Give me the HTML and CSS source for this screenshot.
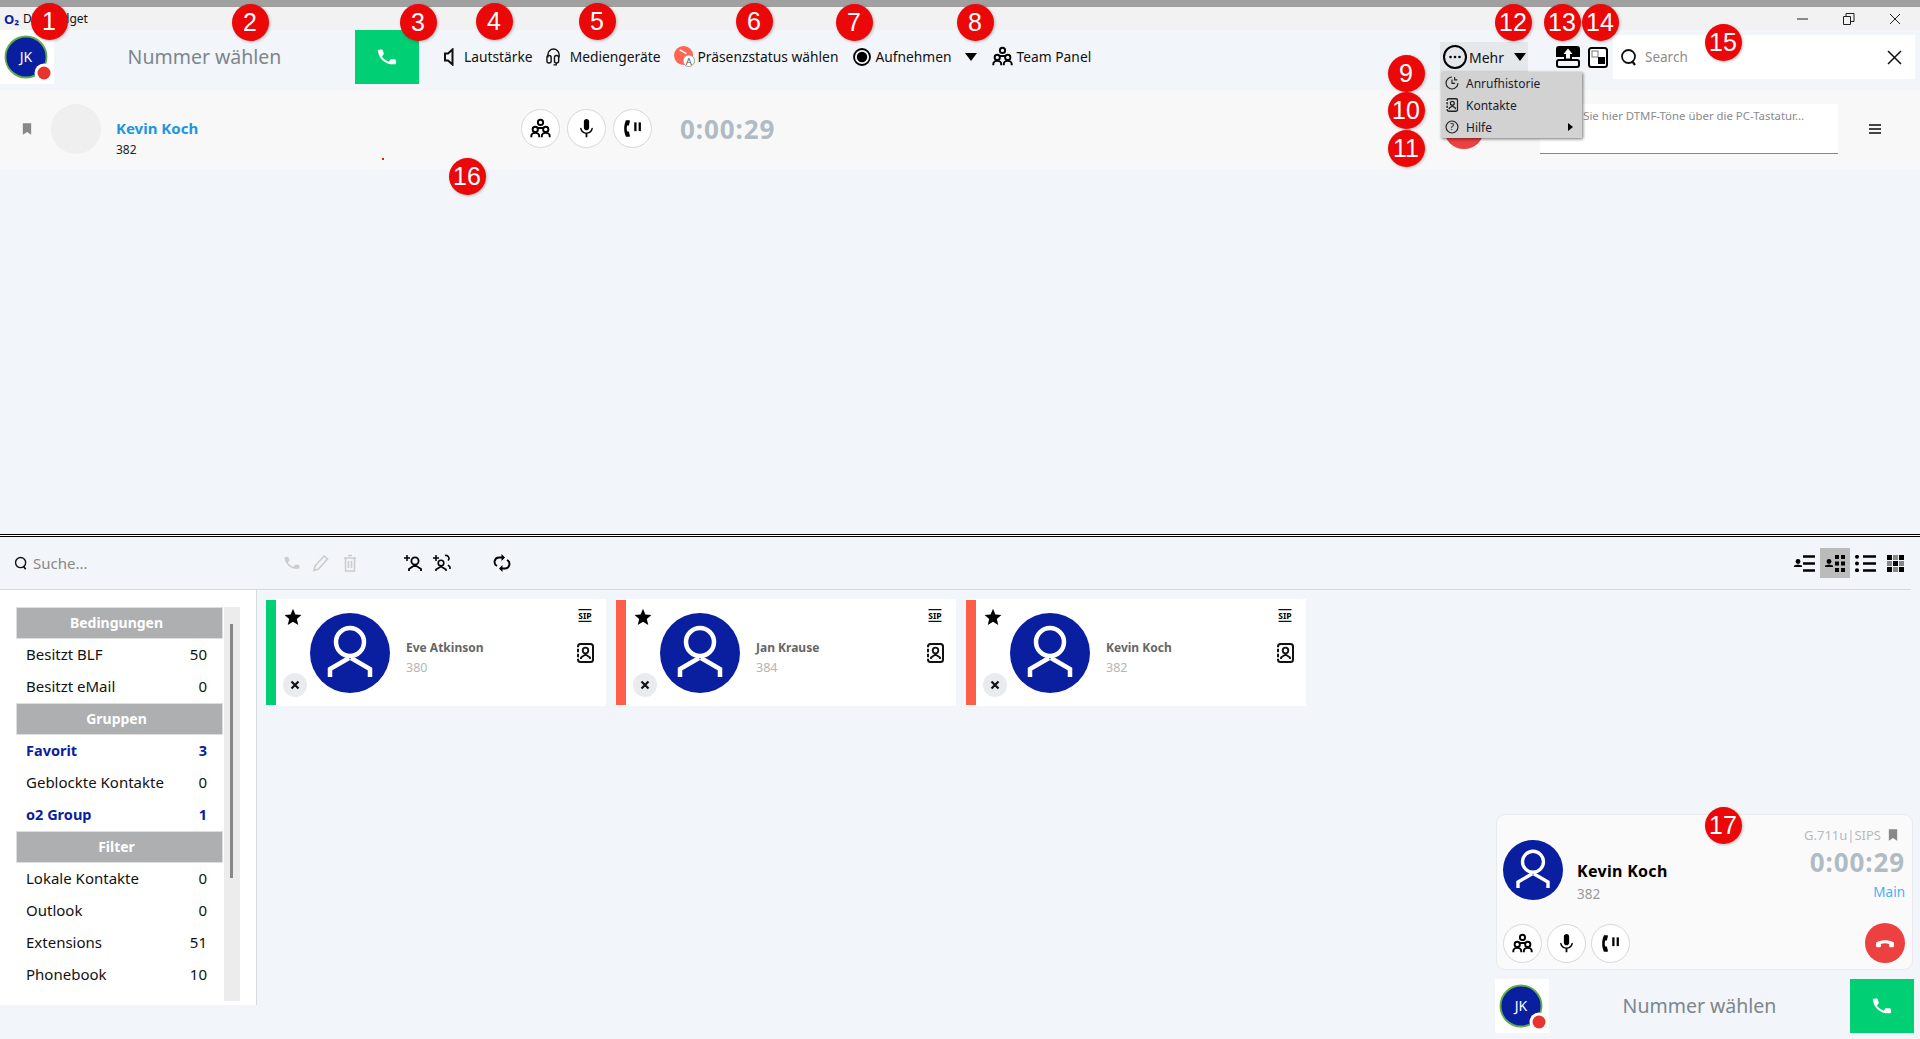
FILE: index.html
```html
<!DOCTYPE html>
<html lang="de">
<head>
<meta charset="utf-8">
<title>Dial Widget</title>
<link rel="stylesheet" href="styles.css">
</head>
<body>
<svg class="defs" aria-hidden="true">
  <symbol id="phone" viewBox="0 0 24 24"><path d="M6.600 10.800c1.400 2.800 3.800 5.100 6.600 6.600l2.200-2.200c.3-.3.700-.4 1-.2 1.100.4 2.300.6 3.600.6.500 0 1 .4 1 1V20c0 .5-.5 1-1 1C10.600 21 3 13.400 3 4c0-.5.500-1 1-1h3.500c.5 0 1 .5 1 1 0 1.200.2 2.400.6 3.600.1.300 0 .7-.3 1l-2.200 2.200z" transform="rotate(-8 12 12)"/></symbol>
  <symbol id="person" viewBox="-40 -40 80 80"><g fill="none" stroke="#fff" stroke-width="4.500"><circle cx="0" cy="-11" r="14"/><path d="M-20 24v-8L-1 5M20 24v-8L1 5"/></g></symbol>
  <symbol id="team" viewBox="0 0 24 24"><g fill="none" stroke="currentColor" stroke-width="2.200"><circle cx="12" cy="5" r="3"/><circle cx="6" cy="13" r="3"/><circle cx="18" cy="13" r="3"/><path d="M1.500 22v-1.500c0-2 2-3.500 4.500-3.500s4.500 1.500 4.500 3.500V22M13.500 22v-1.500c0-2 2-3.500 4.500-3.500s4.500 1.500 4.500 3.500V22M9 11.500h6"/></g></symbol>
  <symbol id="mic" viewBox="0 0 24 24"><path d="M12 14c1.700 0 3-1.300 3-3V4c0-1.700-1.300-3-3-3S9 2.300 9 4v7c0 1.700 1.300 3 3 3z"/><path d="M18.500 11c-.4 0-.7.300-.8.700-.4 2.800-2.800 4.800-5.700 4.800s-5.300-2-5.700-4.800c-.1-.4-.4-.7-.8-.7-.5 0-.9.400-.8.900.4 3.300 3.100 5.700 6.300 6.200V22h2v-3.900c3.200-.5 5.900-2.900 6.300-6.200.1-.5-.3-.9-.8-.9z"/></symbol>
  <symbol id="hold" viewBox="0 0 24 24"><path d="M8 2.500H4.500C3 6 2.500 9 2.500 12s.5 6 2 9.500H8c.8 0 1.200-.6 1-1.300L8 16c-.2-.6-.8-.9-1.300-.7l-.7.200c-.4-1.200-.6-2.300-.6-3.500s.2-2.300.6-3.500l.7.200c.5.200 1.100-.1 1.300-.7l1-4.200c.2-.7-.2-1.300-1-1.300z"/><rect x="14" y="5" width="2.600" height="10"/><rect x="19" y="5" width="2.600" height="10"/></symbol>
  <symbol id="bookmark" viewBox="0 0 12 14"><path d="M1 0h10v14L6 10.500 1 14z"/></symbol>
  <symbol id="search" viewBox="0 0 18 18"><circle cx="8.500" cy="8.500" r="6.500" fill="none" stroke="currentColor" stroke-width="1.800"/><path d="M12 13l3 4" stroke="currentColor" stroke-width="2.200" fill="none"/></symbol>
  <symbol id="star" viewBox="0 0 24 24"><path d="M12 1l3.200 7.500 8 .7-6.100 5.300 1.900 8-7-4.300-7 4.300 1.900-8L.8 9.200l8-.7z"/></symbol>
  <symbol id="cross" viewBox="0 0 10 10"><path d="M1.500 1.500l7 7M8.500 1.500l-7 7" stroke="#111" stroke-width="2.200" fill="none"/></symbol>
  <symbol id="sip" viewBox="0 0 18 16"><path d="M1 .8h16M1 15.200h16" stroke="currentColor" stroke-width="1.400"/><text x="9" y="12.500" text-anchor="middle" font-family="Noto Sans" font-weight="700" font-size="10.500">SIP</text></symbol>
  <symbol id="contact" viewBox="0 0 18 20"><rect x="2" y="1" width="15" height="18" rx="2.500" fill="none" stroke="currentColor" stroke-width="2"/><circle cx="9.500" cy="7.500" r="2.800" fill="none" stroke="currentColor" stroke-width="1.800"/><path d="M5 16v-1.500l4.500-3 4.500 3V16" fill="none" stroke="currentColor" stroke-width="1.800"/><path d="M0 5h3M0 10h3M0 15h3" stroke="#fff" stroke-width="1.500"/></symbol>
  <symbol id="avatar-mini" viewBox="0 0 54 54"><rect width="54" height="54" fill="#fff"/><circle cx="26" cy="27" r="20.500" fill="#0a1ea0" stroke="#5fae46" stroke-width="1.800"/><circle cx="44" cy="43" r="9.500" fill="#fff"/><circle cx="44" cy="43" r="6.500" fill="#e8332e"/><text x="26" y="32" text-anchor="middle" fill="#fff" font-family="Noto Sans" font-size="14">JK</text></symbol>
</svg>

<div class="app">
  <div class="top-strip"></div>
  <div class="titlebar">
    <span class="o2-logo">O₂</span>
    <span class="title-text">Dial Widget</span>
    <div class="win-controls">
      <svg class="win-ic" viewBox="0 0 12 12"><path d="M0 6h11" stroke="#222" stroke-width="1"/></svg>
      <svg class="win-ic" viewBox="0 0 12 12"><path d="M.5 3.500h7v8h-7zM3 3V.5h8v8H8" fill="none" stroke="#222" stroke-width="1"/></svg>
      <svg class="win-ic" viewBox="0 0 12 12"><path d="M1 1l10 10M11 1L1 11" stroke="#222" stroke-width="1"/></svg>
    </div>
  </div>

  <div class="toolbar">
    <svg class="avatar-tile"><use href="#avatar-mini"/></svg>
    <div class="dial-label dial-top">Nummer wählen</div>
    <button class="call-btn"><svg class="call-ic"><use href="#phone"/></svg></button>
    <div class="tools">
      <span class="tool gap10"><svg class="ic-vol" viewBox="0 0 10 18"><path d="M8.500 1.500L4 5.500H1v7h3l4.500 4z" fill="none" stroke="#111" stroke-width="2"/></svg>Lautstärke</span>
      <span class="tool gap9"><svg class="ic-head" viewBox="0 0 16 20"><path d="M2 11V8a6 6 0 0 1 12 0v3" fill="none" stroke="#111" stroke-width="1.500"/><rect x="1" y="9" width="4.500" height="8" rx="2.200" fill="none" stroke="#111" stroke-width="1.500"/><rect x="9" y="9" width="4.500" height="8" rx="2.200" fill="none" stroke="#111" stroke-width="1.500"/><path d="M11 17v2H8" fill="none" stroke="#111" stroke-width="1.300"/></svg>Mediengeräte</span>
      <span class="tool gap3"><svg class="ic-pres" viewBox="0 0 22 22"><circle cx="10" cy="10" r="10" fill="#ff6553"/><path d="M6 4l7 4" stroke="#fff" stroke-width="1.600"/><circle cx="15.500" cy="15.500" r="6" fill="#fff" stroke="#999"/><text x="15.500" y="19.500" text-anchor="middle" font-family="Noto Sans" font-size="10" fill="#555">A</text></svg>Präsenzstatus wählen</span>
      <span class="tool gap4 rec-tool"><svg class="ic-rec" viewBox="0 0 18 18"><circle cx="9" cy="9" r="8" fill="none" stroke="#000" stroke-width="1.800"/><circle cx="9" cy="9" r="5.200"/></svg>Aufnehmen</span>
      <svg class="caret" viewBox="0 0 12 8"><path d="M0 0h12L6 8z"/></svg>
      <span class="tool gap4 team-tool"><svg class="ic-team"><use href="#team"/></svg>Team Panel</span>
    </div>
    <div class="right-tools">
      <span class="more"><svg class="ic-more" viewBox="0 0 24 24"><circle cx="12" cy="12" r="11" fill="none" stroke="#000" stroke-width="2"/><circle cx="7.500" cy="12" r="1.300"/><circle cx="12" cy="12" r="1.300"/><circle cx="16.500" cy="12" r="1.300"/></svg><span>Mehr</span><svg class="caret more-caret" viewBox="0 0 12 8"><path d="M0 0h12L6 8z"/></svg></span>
      <svg class="ic-upload" viewBox="0 0 24 22"><path d="M3 0h18a3 3 0 0 1 3 3v8h-8V13H8v-2H0V3a3 3 0 0 1 3-3z"/><path d="M12 2.500L16.500 8H14v4.500h-4V8H7.500z" fill="#fff"/><rect x="1" y="14" width="22" height="7" rx="2" fill="none" stroke="#000" stroke-width="2"/></svg>
      <svg class="ic-window" viewBox="0 0 20 21"><rect x="1" y="1" width="18" height="19" rx="2.500" fill="#fff" stroke="#000" stroke-width="2"/><rect x="4" y="4" width="6" height="6" fill="#fff" stroke="#777"/><rect x="10" y="10" width="7" height="7"/></svg>
      <div class="search-box">
        <svg class="ic-search"><use href="#search"/></svg>
        <span class="search-ph">Search</span>
        <svg class="ic-close" viewBox="0 0 15 15"><path d="M1 1l13 13M14 1L1 14" stroke="#111" stroke-width="1.500"/></svg>
      </div>
    </div>
  </div>

  <div class="call-row">
    <svg class="ic-bookmark"><use href="#bookmark"/></svg>
    <div class="call-avatar"></div>
    <div class="call-info">
      <div class="call-name">Kevin Koch</div>
      <div class="call-num">382</div>
    </div>
    <div class="round-group">
      <button class="round"><svg class="rg-ic"><use href="#team"/></svg></button>
      <button class="round"><svg class="rg-ic"><use href="#mic"/></svg></button>
      <button class="round"><svg class="rg-ic"><use href="#hold"/></svg></button>
    </div>
    <div class="timer timer-top">0:00:29</div>
    <button class="hangup hangup-top"></button>
    <div class="dtmf">Senden Sie hier DTMF-Töne über die PC-Tastatur...</div>
    <div class="burger"><i></i><i></i><i></i></div>
  </div>

  <div class="spacer"><span class="red-dot"></span></div>
  <div class="divider"></div>

  <div class="contact-toolbar">
    <svg class="ic-search-sm"><use href="#search"/></svg>
    <span class="suche">Suche...</span>
    <svg class="ct-ic off first"><use href="#phone"/></svg>
    <svg class="ct-ic off" viewBox="0 0 18 18"><path d="M3 12L12 2l3.500 3-9 10L2 16.500z" fill="none" stroke="currentColor" stroke-width="1.600"/></svg>
    <svg class="ct-ic off" viewBox="0 0 18 18"><path d="M3 4h12M7 1.500h4M4.500 4v13h9V4M7.500 7v7M10.500 7v7" fill="none" stroke="currentColor" stroke-width="1.600"/></svg>
    <svg class="ct-ic second" viewBox="0 0 18 18"><path d="M0 4h6M3 1v6" stroke="#000" stroke-width="1.500"/><circle cx="11" cy="7" r="3.600" fill="none" stroke="#000" stroke-width="1.800"/><path d="M5 17v-2l6-4 6 4v2" fill="none" stroke="#000" stroke-width="1.800"/></svg>
    <svg class="ct-ic" viewBox="0 0 18 18"><path d="M0 4h6M3 1v6" stroke="#000" stroke-width="1.500"/><circle cx="8" cy="9" r="2.800" fill="none" stroke="#000" stroke-width="1.600"/><path d="M3 17v-1.500l5-3 5 3V17" fill="none" stroke="#000" stroke-width="1.600"/><path d="M12 1.500a3 3 0 0 1 3 5M15 11l2 2v2" fill="none" stroke="#000" stroke-width="1.600"/></svg>
    <svg class="ct-ic third" viewBox="0 0 18 18"><path d="M9 3.500H6a4.500 4.500 0 0 0-2 8.500M9 14.500h3a4.500 4.500 0 0 0 2-8.500" fill="none" stroke="#000" stroke-width="1.900"/><path d="M8.500 0L12 3.500 8.500 7zM9.500 11L6 14.500 9.500 18z"/></svg>
    <div class="views">
      <svg class="view-ic" viewBox="0 0 21 17"><path d="M9 1.500h12M9 8.500h12M9 15.500h12" stroke="#000" stroke-width="2.400"/><circle cx="4" cy="6.500" r="2.400"/><path d="M0 12h8v-1.500L4 9.500l-4 1z"/></svg>
      <span class="view-active"><svg class="view-ic" viewBox="0 0 21 17"><circle cx="4" cy="6.500" r="2.400"/><path d="M0 12h8v-1.500L4 9.500l-4 1z"/><path d="M10 0h4v4h-4zM16 0h4v4h-4zM10 6.500h4v4h-4zM16 6.500h4v4h-4zM10 13h4v4h-4zM16 13h4v4h-4z"/></svg></span>
      <svg class="view-ic" viewBox="0 0 21 17"><path d="M8 1.500h13M8 8.500h13M8 15.500h13" stroke="#000" stroke-width="2.400"/><circle cx="2" cy="1.800" r="2"/><circle cx="2" cy="8.500" r="2"/><circle cx="2" cy="15.200" r="2"/></svg>
      <svg class="view-ic grid-ic" viewBox="0 0 17 17"><path d="M0 0h5v5H0zM12 0h5v5h-5zM6 6h5v5H6zM0 12h5v5H0zM12 12h5v5h-5z"/><path d="M6 0h5v5H6zM0 6h5v5H0zM12 6h5v5h-5zM6 12h5v5H6z" fill="#888"/></svg>
    </div>
  </div>

  <div class="content">
    <aside class="sidebar">
      <div class="filter-list">
        <div class="sec-head">Bedingungen</div>
        <div class="f-row"><span>Besitzt BLF</span><span>50</span></div>
        <div class="f-row"><span>Besitzt eMail</span><span>0</span></div>
        <div class="sec-head">Gruppen</div>
        <div class="f-row active"><span>Favorit</span><span>3</span></div>
        <div class="f-row"><span>Geblockte Kontakte</span><span>0</span></div>
        <div class="f-row active"><span>o2 Group</span><span>1</span></div>
        <div class="sec-head">Filter</div>
        <div class="f-row"><span>Lokale Kontakte</span><span>0</span></div>
        <div class="f-row"><span>Outlook</span><span>0</span></div>
        <div class="f-row"><span>Extensions</span><span>51</span></div>
        <div class="f-row"><span>Phonebook</span><span>10</span></div>
      </div>
      <div class="scroll-track"><div class="scroll-thumb"></div></div>
    </aside>
    <main class="cards">
      <article class="card">
        <div class="bar green"></div>
        <div class="card-left"><svg class="star"><use href="#star"/></svg><span class="x-btn"><svg class="x-ic"><use href="#cross"/></svg></span></div>
        <div class="card-av"><svg class="card-person"><use href="#person"/></svg></div>
        <div class="card-info"><div class="card-name">Eve Atkinson</div><div class="card-num">380</div></div>
        <div class="card-right"><svg class="sip"><use href="#sip"/></svg><svg class="contact"><use href="#contact"/></svg></div>
      </article>
      <article class="card">
        <div class="bar red"></div>
        <div class="card-left"><svg class="star"><use href="#star"/></svg><span class="x-btn"><svg class="x-ic"><use href="#cross"/></svg></span></div>
        <div class="card-av"><svg class="card-person"><use href="#person"/></svg></div>
        <div class="card-info"><div class="card-name">Jan Krause</div><div class="card-num">384</div></div>
        <div class="card-right"><svg class="sip"><use href="#sip"/></svg><svg class="contact"><use href="#contact"/></svg></div>
      </article>
      <article class="card">
        <div class="bar red"></div>
        <div class="card-left"><svg class="star"><use href="#star"/></svg><span class="x-btn"><svg class="x-ic"><use href="#cross"/></svg></span></div>
        <div class="card-av"><svg class="card-person"><use href="#person"/></svg></div>
        <div class="card-info"><div class="card-name">Kevin Koch</div><div class="card-num">382</div></div>
        <div class="card-right"><svg class="sip"><use href="#sip"/></svg><svg class="contact"><use href="#contact"/></svg></div>
      </article>
    </main>
  </div>
  <div class="foot"></div>
</div>

<div class="menu">
  <div class="m-row"><svg class="m-ic" viewBox="0 0 16 16"><path d="M8 1.200A6.800 6.800 0 1 0 14.800 8" fill="none" stroke="#222" stroke-width="1.300"/><path d="M8 4v4.500h3.500M11 1v3.500h3" fill="none" stroke="#222" stroke-width="1.300"/></svg><span>Anrufhistorie</span></div>
  <div class="m-row"><svg class="m-ic" viewBox="0 0 18 20"><use href="#contact"/></svg><span>Kontakte</span></div>
  <div class="m-row"><svg class="m-ic" viewBox="0 0 16 16"><circle cx="8" cy="8" r="6.800" fill="none" stroke="#222" stroke-width="1.300"/><text x="8" y="11.800" text-anchor="middle" font-family="Noto Sans" font-size="10.500">?</text></svg><span>Hilfe</span><svg class="m-arrow" viewBox="0 0 5 8"><path d="M0 0l5 4-5 4z"/></svg></div>
</div>

<section class="dock">
  <div class="dock-card">
    <div class="dock-top">
      <div class="dock-av"><svg class="dock-person"><use href="#person"/></svg></div>
      <div class="dock-info"><div class="dock-name">Kevin Koch</div><div class="dock-num">382</div></div>
      <div class="dock-meta">
        <div class="codec"><span>G.711u|SIPS</span><svg class="ic-bookmark"><use href="#bookmark"/></svg></div>
        <div class="timer dock-timer">0:00:29</div>
        <div class="main-lbl">Main</div>
      </div>
    </div>
    <div class="dock-actions">
      <div class="round-group dock-group">
        <button class="round"><svg class="rg-ic"><use href="#team"/></svg></button>
        <button class="round"><svg class="rg-ic"><use href="#mic"/></svg></button>
        <button class="round"><svg class="rg-ic"><use href="#hold"/></svg></button>
      </div>
      <button class="hangup"><svg class="hang-ic" viewBox="0 0 24 24"><path d="M12 9c-3 0-6 .6-8.800 2-.6.3-1 .9-1 1.500v3c0 .5.500 1 1 1h3.300c.5 0 1-.5 1-1v-2.500c1.600-.5 3-.7 4.500-.7s2.900.2 4.500.7V15.500c0 .5.500 1 1 1h3.300c.5 0 1-.5 1-1v-3c0-.6-.4-1.200-1-1.500C18 9.600 15 9 12 9z"/></svg></button>
    </div>
  </div>
  <div class="dock-dial">
    <svg class="avatar-tile"><use href="#avatar-mini"/></svg>
    <div class="dial-label dial-bottom">Nummer wählen</div>
    <button class="call-btn"><svg class="call-ic"><use href="#phone"/></svg></button>
  </div>
</section>

<span class="badge b1">1</span><span class="badge b2">2</span><span class="badge b3">3</span><span class="badge b4">4</span><span class="badge b5">5</span><span class="badge b6">6</span><span class="badge b7">7</span><span class="badge b8">8</span><span class="badge b9">9</span><span class="badge b10">10</span><span class="badge b11">11</span><span class="badge b12">12</span><span class="badge b13">13</span><span class="badge b14">14</span><span class="badge b15">15</span><span class="badge b16">16</span><span class="badge b17">17</span>
</body>
</html>
```
FILE: styles.css
```css
* { box-sizing: border-box; }
html, body { margin: 0; height: 100%; overflow: hidden; }
body { font-family: "Noto Sans", "Liberation Sans", sans-serif; font-size: 14px; color: #111; background: #f2f5f9; position: relative; }
button { border: 0; padding: 0; font: inherit; cursor: pointer; }
svg { display: block; flex: none; }
.defs { position: absolute; width: 0; height: 0; }

.app { height: 1039px; display: flex; flex-direction: column; }
.top-strip { height: 7px; background: #a0a0a0; }

.titlebar { height: 23px; background: #f2f2f2; display: flex; align-items: center; padding-left: 4px; }
.o2-logo { width: 19px; font-weight: 700; font-size: 13px; color: #0a1ea0; }
.title-text { font-size: 12px; }
.win-controls { margin-left: auto; padding-right: 19px; display: flex; gap: 34px; }
.win-ic { width: 12px; height: 12px; }

.toolbar { height: 60px; display: flex; align-items: flex-start; }
.avatar-tile { width: 54px; height: 54px; }
.dial-label { color: #7d868d; font-size: 19.500px; text-align: center; line-height: 54px; }
.dial-top { width: 301px; }
.call-btn { width: 64px; height: 54px; background: #00cf74; display: flex; align-items: center; justify-content: center; }
.call-ic { width: 22px; height: 22px; fill: #fff; }
.tools { display: flex; align-items: center; gap: 13px; height: 53px; padding-left: 25px; font-size: 13.800px; }
.tool { display: flex; align-items: center; white-space: nowrap; }
.gap10 { gap: 10px; }
.gap9 { gap: 9px; }
.gap3 { gap: 3px; }
.gap4 { gap: 4px; }
.rec-tool { margin-left: 2px; }
.team-tool { margin-left: 2px; }
.ic-vol { width: 10px; height: 18px; }
.ic-head { width: 15px; height: 19px; }
.ic-pres { width: 21px; height: 21px; }
.ic-rec { width: 18px; height: 18px; }
.ic-team { width: 21px; height: 21px; color: #000; }
.caret { width: 12px; height: 8px; }

.right-tools { margin-left: auto; display: flex; align-items: center; height: 44px; margin-top: 5px; padding-right: 5px; }
.more { width: 88px; height: 30px; background: #e4e8eb; display: flex; align-items: center; padding-left: 3px; gap: 2px; }
.ic-more { width: 24px; height: 24px; }
.more-caret { margin-left: 8px; }
.ic-upload { width: 24px; height: 22px; margin-left: 28px; }
.ic-window { width: 20px; height: 21px; margin-left: 8px; }
.search-box { width: 302px; height: 44px; margin-left: 5px; background: #fff; display: flex; align-items: center; padding: 0 13px 0 7px; }
.ic-search { width: 18px; height: 18px; color: #111; }
.search-ph { margin-left: 7px; color: #8c8c8c; font-size: 13.500px; }
.ic-close { width: 15px; height: 15px; margin-left: auto; }

.call-row { height: 79px; background: #f8f8f8; display: flex; align-items: center; padding: 0 39px 2px 22px; }
.ic-bookmark { width: 10px; height: 12px; fill: #888; }
.call-avatar { width: 50px; height: 50px; border-radius: 50%; background: #efefef; margin-left: 19px; }
.call-info { width: 420px; padding: 18px 0 0 15px; }
.call-name { color: #2196e0; font-weight: 700; font-size: 15px; line-height: 20px; }
.call-num { font-size: 12px; line-height: 16px; margin-top: 4px; color: #222; }
.round-group { display: flex; gap: 7px; }
.round { width: 39px; height: 39px; border-radius: 50%; background: #fff; border: 1px solid #d8d8d8; display: flex; align-items: center; justify-content: center; }
.rg-ic { width: 21px; height: 21px; color: #000; fill: #000; }
.timer { color: #b0bbc4; font-weight: 700; font-size: 26px; line-height: 30px; letter-spacing: .9px; white-space: nowrap; }
.timer-top { margin-left: 28px; }
.hangup { width: 40px; height: 40px; border-radius: 50%; background: #ed4040; display: flex; align-items: center; justify-content: center; }
.hangup-top { margin-left: auto; }
.dtmf { width: 298px; height: 50px; margin-left: 56px; background: #fff; border-bottom: 1px solid #888; color: #8a8a8a; font-size: 11.400px; line-height: 24px; white-space: nowrap; overflow: hidden; }
.burger { width: 12px; margin-left: 31px; display: flex; flex-direction: column; gap: 2px; }
.burger i { height: 2px; background: #444; }

.spacer { flex: 0 0 365px; position: relative; }
.red-dot { position: absolute; left: 382px; top: -11px; width: 2px; height: 2px; background: #e02020; }
.divider { height: 3px; border-top: 1px solid #000; border-bottom: 1px solid #000; background: #fff; }

.contact-toolbar { height: 53px; margin-right: 9px; border-bottom: 1px solid #d8dbde; display: flex; align-items: center; padding: 0 7px 0 14px; }
.ic-search-sm { width: 14px; height: 14px; color: #111; }
.suche { width: 250px; margin-left: 5px; color: #888; font-size: 15px; }
.ct-ic { width: 18px; height: 18px; margin-left: 11px; }
.ct-ic.first { margin-left: 0; }
.off { fill: #ccc; color: #ccc; }
.ct-ic.second { margin-left: 45px; }
.ct-ic.third { margin-left: 42px; }
.views { margin-left: auto; display: flex; align-items: center; gap: 5px; }
.view-ic { width: 21px; height: 17px; }
.view-active { width: 30px; height: 30px; background: #bbb; display: flex; align-items: center; justify-content: center; }
.grid-ic { width: 17px; margin-left: 6px; }

.content { flex: 0 0 415px; display: flex; }
.sidebar { width: 257px; background: #fff; border-right: 1px solid #d8dbde; display: flex; padding: 17px 0 0 16px; }
.filter-list { width: 207px; }
.sec-head { height: 32px; background: #aeafb1; border: 1px solid #ddd; color: #fff; font-weight: 700; font-size: 14px; line-height: 29px; text-align: center; padding-right: 6px; }
.f-row { height: 32px; display: flex; justify-content: space-between; align-items: center; padding: 0 16px 2px 10px; font-size: 15px; color: #111; }
.f-row.active { color: #0a1ea0; font-weight: 700; font-size: 14.500px; }
.scroll-track { width: 16px; height: 394px; margin-left: 1px; background: #ececec; padding: 17px 0 0 6px; }
.scroll-thumb { width: 3px; height: 254px; background: #888; }

.cards { flex: 1; display: flex; gap: 10px; padding: 9px 0 0 9px; align-items: flex-start; }
.card { width: 340px; height: 107px; background: #fff; display: flex; align-items: stretch; }
.bar { width: 10px; margin: 1px 0; }
.bar.green { background: #00cf74; }
.bar.red { background: #ff5f4a; }
.card-left { width: 34px; padding: 9px 0 9px 7px; display: flex; flex-direction: column; justify-content: space-between; align-items: flex-start; }
.star { width: 18px; height: 18px; margin-left: 1px; }
.x-btn { width: 24px; height: 24px; border-radius: 50%; background: #e9ecef; display: flex; align-items: center; justify-content: center; }
.x-ic { width: 10px; height: 10px; }
.card-av { width: 80px; height: 80px; border-radius: 50%; background: #0a1ea0; align-self: center; }
.card-person { width: 80px; height: 80px; }
.card-info { flex: 1; padding: 10px 0 0 16px; align-self: center; }
.card-name { font-size: 12px; font-weight: 700; color: #666; line-height: 18px; }
.card-num { font-size: 12.500px; color: #b5b5b5; line-height: 18px; margin-top: 2px; }
.card-right { width: 30px; padding: 10px 12px 0 0; display: flex; flex-direction: column; gap: 21px; }
.sip { width: 18px; height: 13px; color: #111; }
.contact { width: 18px; height: 20px; color: #111; }
.foot { flex: 1; }

.menu { position: absolute; left: 1441px; top: 72px; width: 141px; height: 66px; background: #d2d2d2; box-shadow: 1px 1px 3px rgba(0,0,0,.55); display: flex; flex-direction: column; }
.m-row { height: 22px; display: flex; align-items: center; padding-left: 4px; font-size: 12px; color: #1a1a2e; position: relative; }
.m-row span { margin-left: 7px; }
.m-ic { width: 14px; height: 14px; color: #222; }
.m-arrow { position: absolute; left: 127px; top: 7px; width: 5px; height: 8px; }

.dock { position: absolute; left: 1495px; top: 814px; width: 419px; }
.dock-card { margin: 0 1px; height: 156px; background: #fafafa; border: 1px solid #e8eaed; border-radius: 9px; padding: 0 7px 6px 6px; display: flex; flex-direction: column; }
.dock-top { flex: 1; display: flex; align-items: flex-start; }
.dock-av { width: 60px; height: 60px; margin-top: 25px; border-radius: 50%; background: #0a1ea0; }
.dock-person { width: 60px; height: 60px; }
.dock-info { flex: 1; padding: 45px 0 0 14px; }
.dock-name { font-size: 16px; font-weight: 700; color: #000; line-height: 22px; letter-spacing: .3px; }
.dock-num { font-size: 13.500px; color: #999; line-height: 18px; margin-top: 3px; }
.dock-meta { width: 104px; display: flex; flex-direction: column; align-items: flex-end; padding-top: 11px; }
.codec { display: flex; align-items: center; gap: 7px; font-size: 13px; color: #b5bac0; line-height: 18px; padding-right: 7px; white-space: nowrap; }
.dock-timer { margin-top: 3px; }
.main-lbl { font-size: 13.500px; color: #4db0f0; line-height: 18px; margin-top: 6px; }
.dock-actions { display: flex; justify-content: space-between; align-items: center; }
.dock-group { gap: 5px; }
.hang-ic { width: 22px; height: 22px; fill: #fff; }
.dock-dial { display: flex; margin-top: 9px; }
.dial-bottom { flex: 1; }

.badge { position: absolute; width: 37px; height: 37px; margin: -18.500px 0 0 -18.500px; border-radius: 50%; background: #ea0808; color: #fff; font-family: "Liberation Sans", sans-serif; font-size: 25px; line-height: 37px; text-align: center; box-shadow: 1px 1px 3px rgba(0,0,0,.25); }
.b1 { left: 49px; top: 21px; }
.b2 { left: 250px; top: 22px; }
.b3 { left: 418px; top: 22px; }
.b4 { left: 494px; top: 21px; }
.b5 { left: 597px; top: 21px; }
.b6 { left: 754px; top: 21px; }
.b7 { left: 854px; top: 22px; }
.b8 { left: 975px; top: 22px; }
.b9 { left: 1406px; top: 73px; }
.b10 { left: 1406px; top: 110px; }
.b11 { left: 1406px; top: 148px; }
.b12 { left: 1513px; top: 22px; }
.b13 { left: 1562px; top: 22px; }
.b14 { left: 1600px; top: 22px; }
.b15 { left: 1723px; top: 42px; }
.b16 { left: 467px; top: 176px; }
.b17 { left: 1723px; top: 825px; }
```
